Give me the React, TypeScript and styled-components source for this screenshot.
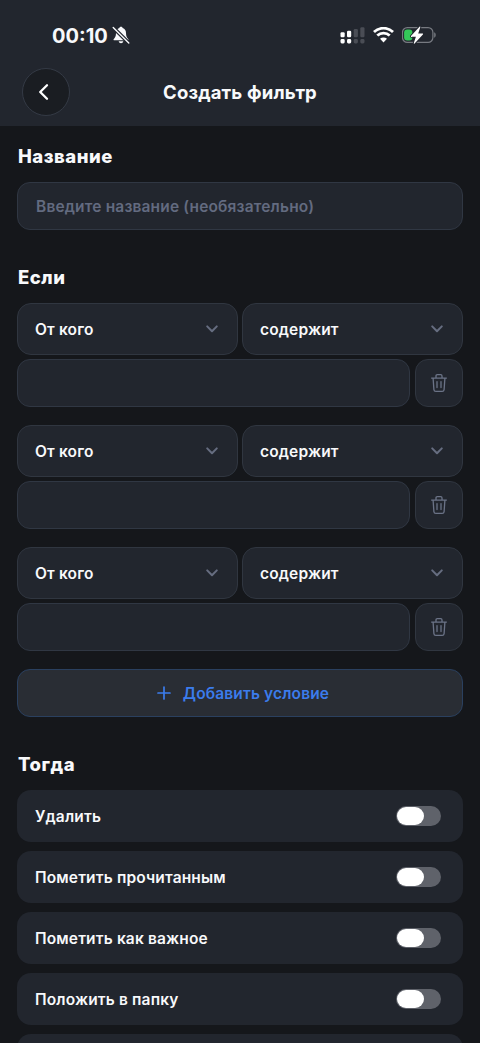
import React, { useState } from 'react';
import styled, { createGlobalStyle } from 'styled-components';

const GlobalStyle = createGlobalStyle`
  * { box-sizing: border-box; }
  html, body { margin: 0; background: #15171b; }
  body { font-family: Inter, "Liberation Sans", sans-serif; color: #f8f9fb; overflow: hidden; }
  button, input { font: inherit; color: inherit; margin: 0; }
`;

const Screen = styled.div`
  width: 480px;
  height: 1043px;
  overflow: hidden;
  background: #15171b;
`;

const Header = styled.header`
  height: 126px;
  background: #22262e;
`;

const StatusBar = styled.div`
  height: 67px;
  padding: 3px 44px 0 52px;
  display: flex;
  align-items: center;
  justify-content: space-between;
`;

const StatusGroup = styled.div<{ $gap: number }>`
  display: flex;
  align-items: center;
  gap: ${(p) => p.$gap}px;
`;

const Clock = styled.span`
  padding-top: 2px;
  font-size: 20px;
  font-weight: 700;
  line-height: 24px;
`;

const NavBar = styled.div`
  height: 50px;
  padding: 0 22px;
  display: grid;
  grid-template-columns: 48px 1fr 48px;
  align-items: center;
`;

const BackButton = styled.button`
  width: 48px;
  height: 48px;
  padding: 0 6px 0 0;
  border: 1px solid #343a45;
  border-radius: 50%;
  background: #1a1d22;
  display: flex;
  align-items: center;
  justify-content: center;
`;

const Title = styled.h1`
  margin: 0;
  text-align: center;
  font-size: 18.5px;
  font-weight: 700;
  line-height: 24px;
  letter-spacing: 0.17px;
`;

const Content = styled.main`
  padding: 18px 17px 0;
`;

const Section = styled.section<{ $after?: number }>`
  margin-bottom: ${(p) => p.$after ?? 0}px;
`;

const SectionTitle = styled.h2`
  margin: 0 0 14px 1px;
  font-size: 18.5px;
  font-weight: 800;
  line-height: 24px;
  letter-spacing: 0.5px;
`;

const TextField = styled.input`
  display: block;
  flex: 1;
  width: 100%;
  min-width: 0;
  height: 48px;
  padding: 0 18px;
  border: 1px solid #303743;
  border-radius: 13px;
  background: #22262e;
  font-size: 15.5px;
  font-weight: 600;
  letter-spacing: 0.17px;
  outline: none;
  &::placeholder { color: #636b80; opacity: 1; }
`;

const Conditions = styled.div`
  display: flex;
  flex-direction: column;
  gap: 18px;
`;

const Condition = styled.div`
  display: flex;
  flex-direction: column;
  gap: 4px;
`;

const ConditionRow = styled.div<{ $gap: number }>`
  display: flex;
  gap: ${(p) => p.$gap}px;
`;

const SelectButton = styled.button`
  flex: 1;
  height: 52px;
  padding: 0 18.5px 0 17px;
  border: 1px solid #303640;
  border-radius: 14px;
  background: #22262e;
  display: flex;
  align-items: center;
  justify-content: space-between;
  font-size: 15.5px;
  font-weight: 600;
  letter-spacing: 0.16px;
`;

const DeleteButton = styled.button`
  width: 48px;
  height: 48px;
  padding: 0 1px 0 0;
  border: 1px solid #303640;
  border-radius: 13px;
  background: #22262e;
  display: flex;
  align-items: center;
  justify-content: center;
`;

const AddButton = styled.button`
  width: 100%;
  height: 48px;
  margin-top: 18px;
  padding: 0 0 0 6px;
  border: 1px solid #2a405f;
  border-radius: 13px;
  background: #292d34;
  color: #3b7cec;
  display: flex;
  align-items: center;
  justify-content: center;
  gap: 12px;
  font-size: 15.5px;
  font-weight: 600;
  letter-spacing: 0.14px;
`;

const Actions = styled.div`
  display: flex;
  flex-direction: column;
  gap: 9.1px;
`;

const ActionRow = styled.div`
  height: 52px;
  flex: none;
  padding: 0 22px 0 18px;
  border-radius: 14px;
  background: #22262e;
  display: flex;
  align-items: center;
  justify-content: space-between;
  font-size: 15.5px;
  font-weight: 600;
  letter-spacing: 0.15px;
`;

const Track = styled.button<{ $on: boolean }>`
  width: 45px;
  height: 20px;
  padding: 1px;
  border: 0;
  border-radius: 10px;
  background: ${(p) => (p.$on ? '#34c759' : '#5f626a')};
  display: flex;
  justify-content: ${(p) => (p.$on ? 'flex-end' : 'flex-start')};
`;

const Thumb = styled.span`
  width: 27px;
  height: 18px;
  border-radius: 9px;
  background: #fff;
`;

const MutedBell = () => (
  <svg width="18" height="18" viewBox="0 0 18 18">
    <path d="M9 .8c-.9 0-1.500.5-1.600 1.200C5 2.700 4 4.700 4 7c0 3.400-1 4.700-2.200 5.900-.6.7-.2 1.400.6 1.400h13.200c.8 0 1.200-.7.6-1.400C15 11.700 14 10.400 14 7c0-2.300-1-4.300-3.400-5C10.500 1.300 9.900.8 9 .8Z" fill="#f8f9fb" />
    <path d="M6.700 15.300h4.600c-.2 1.200-1.100 1.900-2.300 1.900s-2.100-.7-2.300-1.900Z" fill="#f8f9fb" />
    <path d="M.8 1.200 16.800 17" stroke="#22262e" strokeWidth="3.800" />
    <path d="M1.200 1.500 16.800 17" stroke="#f8f9fb" strokeWidth="1.400" strokeLinecap="round" />
  </svg>
);

const Signal = () => (
  <svg width="25" height="17" viewBox="0 0 25 17">
    <g fill="#fff">
      <rect x="0.500" y="5.300" width="4.200" height="5" rx="1.200" />
      <rect x="7" y="3.800" width="4.200" height="6.500" rx="1.200" />
      <rect x="0.500" y="12" width="4.200" height="4.500" rx="1.400" />
      <rect x="7" y="12" width="4.200" height="4.500" rx="1.400" />
    </g>
    <g fill="#4a4d55">
      <rect x="13.700" y="2" width="4.200" height="8.300" rx="1.200" />
      <rect x="20.300" y="0.300" width="4.200" height="10" rx="1.200" />
      <rect x="13.700" y="12" width="4.200" height="4.500" rx="1.400" />
      <rect x="20.300" y="12" width="4.200" height="4.500" rx="1.400" />
    </g>
  </svg>
);

const Wifi = () => (
  <svg width="21" height="16" viewBox="0.500 0.300 21 16">
    <g fill="none" stroke="#fff" strokeWidth="2.800">
      <path d="M1.500 5.400C6.800.2 15.200.2 20.500 5.400" />
      <path d="M4.800 8.900c3.500-3.400 8.900-3.400 12.400 0" />
    </g>
    <path d="M11 15.700 7.500 12.100c2-1.800 5-1.800 7 0Z" fill="#fff" />
  </svg>
);

const Battery = () => (
  <svg width="34" height="18" viewBox="0.300 0 34 18">
    <rect x="0.800" y="1.600" width="30.400" height="14.800" rx="4.800" fill="none" stroke="#777a81" strokeWidth="1.200" />
    <path d="M32.500 6.300c2 .8 2 4.600 0 5.400Z" fill="#777a81" />
    <rect x="2.400" y="3.500" width="8.300" height="11" rx="3" fill="#34c759" />
    <path d="M17.800.8 9.500 9.800c-.4.500-.2.900.4.900h4.300l-2.100 6.300c-.2.700.4.900.8.400l8.300-9c.4-.5.200-.9-.4-.9h-4.300l2.100-6.300c.2-.7-.4-.9-.8-.4Z" fill="#fff" stroke="#22262e" strokeWidth="2" paintOrder="stroke" />
  </svg>
);

const ChevronLeft = () => (
  <svg width="11" height="18" viewBox="0 0 11 18">
    <path d="M9 2.200 2.200 9 9 15.800" fill="none" stroke="#fff" strokeWidth="2.300" strokeLinecap="round" strokeLinejoin="round" />
  </svg>
);

const ChevronDown = () => (
  <svg width="14" height="10" viewBox="0 0 14 10">
    <path d="m2.200 2.400 4.800 4.900 4.800-4.900" fill="none" stroke="#666d80" strokeWidth="2" strokeLinecap="round" strokeLinejoin="round" />
  </svg>
);

const Trash = () => (
  <svg width="18" height="20" viewBox="0 0 18 20">
    <g fill="none" stroke="#6b7387" strokeWidth="1.300" strokeLinecap="round" strokeLinejoin="round">
      <path d="M1.600 5.100h14.800M6 5V2.900c0-.8.500-1.300 1.300-1.300h3.400c.8 0 1.300.5 1.300 1.300V5M3.100 5.200l.8 11.400c.1 1.200.7 1.800 1.900 1.800h6.400c1.200 0 1.800-.6 1.900-1.800l.8-11.400M7 8.600v6M11 8.600v6" />
    </g>
  </svg>
);

const Plus = () => (
  <svg width="14" height="14" viewBox="0 0 14 14">
    <path d="M7 1v12M1 7h12" stroke="#3b7cec" strokeWidth="1.700" strokeLinecap="round" />
  </svg>
);

const Switch = ({ label }: { label: string }) => {
  const [on, setOn] = useState(false);
  return (
    <Track $on={on} role="switch" aria-checked={on} aria-label={label} onClick={() => setOn(!on)}>
      <Thumb />
    </Track>
  );
};

const actions = ['Удалить', 'Пометить прочитанным', 'Пометить как важное', 'Положить в папку'];

export default function App() {
  return (
    <Screen>
      <GlobalStyle />
      <Header>
        <StatusBar>
          <StatusGroup $gap={4}>
            <Clock>00:10</Clock>
            <MutedBell />
          </StatusGroup>
          <StatusGroup $gap={8}>
            <Signal />
            <Wifi />
            <Battery />
          </StatusGroup>
        </StatusBar>
        <NavBar>
          <BackButton aria-label="Назад"><ChevronLeft /></BackButton>
          <Title>Создать фильтр</Title>
        </NavBar>
      </Header>
      <Content>
        <Section $after={35}>
          <SectionTitle>Название</SectionTitle>
          <TextField placeholder="Введите название (необязательно)" />
        </Section>
        <Section $after={35}>
          <SectionTitle>Если</SectionTitle>
          <Conditions>
            {[0, 1, 2].map((i) => (
              <Condition key={i}>
                <ConditionRow $gap={4}>
                  <SelectButton>От кого<ChevronDown /></SelectButton>
                  <SelectButton>содержит<ChevronDown /></SelectButton>
                </ConditionRow>
                <ConditionRow $gap={5}>
                  <TextField aria-label="Значение" />
                  <DeleteButton aria-label="Удалить условие"><Trash /></DeleteButton>
                </ConditionRow>
              </Condition>
            ))}
          </Conditions>
          <AddButton><Plus />Добавить условие</AddButton>
        </Section>
        <Section>
          <SectionTitle>Тогда</SectionTitle>
          <Actions>
            {actions.map((name) => (
              <ActionRow key={name}>{name}<Switch label={name} /></ActionRow>
            ))}
            <ActionRow />
          </Actions>
        </Section>
      </Content>
    </Screen>
  );
}
